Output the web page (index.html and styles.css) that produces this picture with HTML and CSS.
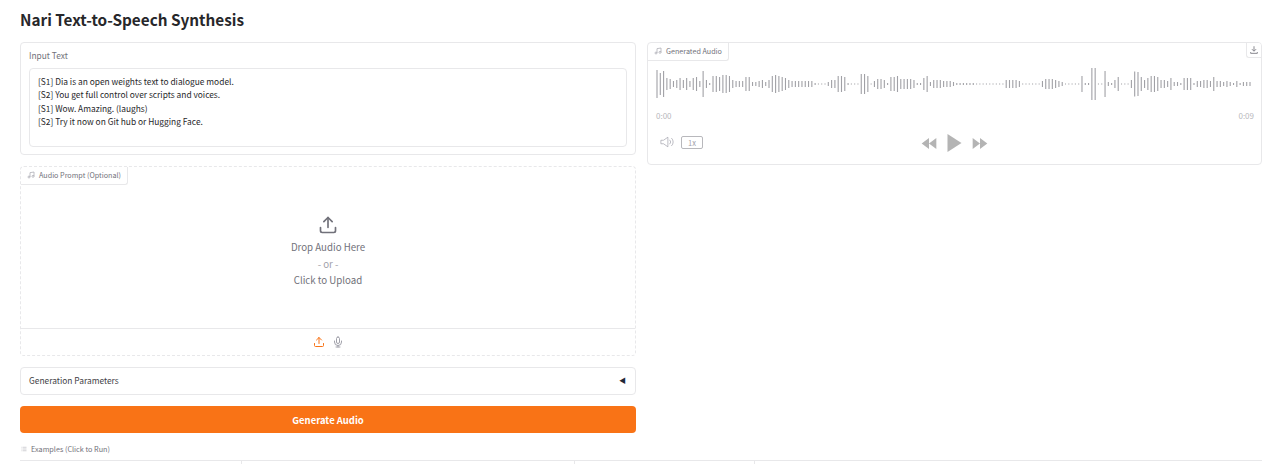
FILE: index.html
```html
<!DOCTYPE html>
<html lang="en">
<head>
<meta charset="utf-8">
<title>Nari Text-to-Speech Synthesis</title>
<link rel="stylesheet" href="styles.css">
</head>
<body>
<main class="page">
  <h1 class="title">Nari Text-to-Speech Synthesis</h1>
  <div class="columns">
    <section class="col">
      <div class="card input-card">
        <div class="label">Input Text</div>
        <div class="textarea">[S1] Dia is an open weights text to dialogue model.
[S2] You get full control over scripts and voices.
[S1] Wow. Amazing. (laughs)
[S2] Try it now on Git hub or Hugging Face.</div>
      </div>
      <div class="card prompt-card">
        <div class="tag">
          <svg class="tag-icon" viewBox="0 0 24 24"><path d="M9 18V5l12-2v13"/><circle cx="6" cy="18" r="3"/><circle cx="18" cy="16" r="3"/></svg>
          <span>Audio Prompt (Optional)</span>
        </div>
        <div class="drop">
          <svg class="upload-big" viewBox="0 0 24 24"><path d="M21 15v4a2 2 0 0 1-2 2H5a2 2 0 0 1-2-2v-4"/><path d="M17 8l-5-5-5 5"/><path d="M12 3v12"/></svg>
          <div class="drop-line">Drop Audio Here</div>
          <div class="drop-or">- or -</div>
          <div class="drop-line">Click to Upload</div>
        </div>
        <div class="sources">
          <svg class="src-upload" viewBox="0 0 24 24"><path d="M21 15v4a2 2 0 0 1-2 2H5a2 2 0 0 1-2-2v-4"/><path d="M17 8l-5-5-5 5"/><path d="M12 3v12"/></svg>
          <svg class="src-mic" viewBox="0 0 24 24"><path d="M12 2a3 3 0 0 0-3 3v7a3 3 0 0 0 6 0V5a3 3 0 0 0-3-3z"/><path d="M19 10v2a7 7 0 0 1-14 0v-2"/><path d="M12 19v3"/><path d="M8 22h8"/></svg>
        </div>
      </div>
      <div class="card accordion">
        <span>Generation Parameters</span>
        <span class="caret">◀</span>
      </div>
      <button class="generate">Generate Audio</button>
      <div class="examples-label">
        <svg class="list-icon" viewBox="0 0 12 10"><path d="M3 1.500h8M3 5h8M3 8.500h8M0.500 1.500h1M0.500 5h1M0.500 8.500h1"/></svg>
        <span>Examples (Click to Run)</span>
      </div>
    </section>
    <section class="col">
      <div class="card audio-card">
        <div class="tag">
          <svg class="tag-icon" viewBox="0 0 24 24"><path d="M9 18V5l12-2v13"/><circle cx="6" cy="18" r="3"/><circle cx="18" cy="16" r="3"/></svg>
          <span>Generated Audio</span>
        </div>
        <button class="download" aria-label="Download">
          <svg viewBox="0 0 24 24"><path d="M12 3v11M7 10l5 5 5-5M4 17v3h16v-3"/></svg>
        </button>
        <div class="player">
          <svg id="wave" class="wave" viewBox="0 0 596 36"></svg>
          <div class="times"><span>0:00</span><span>0:09</span></div>
          <div class="controls">
            <div class="ctl-left">
              <svg class="volume" viewBox="0 0 16 12"><path d="M1 4h3l5-3.500v11L4 8H1z"/><path d="M11 3.500a3.500 3.500 0 0 1 0 5M13 1.500a6 6 0 0 1 0 9"/></svg>
              <span class="speed">1x</span>
            </div>
            <div class="ctl-mid">
              <svg class="skip" viewBox="0 0 16 12"><path d="M8 0v12L0 6zM16 0v12L8 6z"/></svg>
              <svg class="play" viewBox="0 0 14 18"><path d="M0 0l14 9L0 18z"/></svg>
              <svg class="skip" viewBox="0 0 16 12"><path d="M0 0l8 6-8 6zM8 0l8 6-8 6z"/></svg>
            </div>
          </div>
        </div>
      </div>
    </section>
  </div>
  <div class="table-top">
    <div class="cell cell-a"></div>
    <div class="cell cell-b"></div>
    <div class="cell cell-c"></div>
    <div class="cell cell-d"></div>
  </div>
</main>
<script src="wave.js"></script>
</body>
</html>
```
FILE: styles.css
```css
* { box-sizing: border-box; }
html, body { margin: 0; height: 464px; overflow: hidden; background: #fff; }
body { font-family: "Noto Sans CJK SC", "Noto Sans", sans-serif; color: #27272a; }
.page { padding: 8px 18px 0 20px; }
.title { margin: 0 0 11px; font-size: 15.300px; line-height: 23px; font-weight: 600; color: #27272a; }
.columns { display: flex; gap: 11px; align-items: flex-start; }
.col { display: flex; flex-direction: column; }
.col:first-child { width: 616px; }
.col:last-child { width: 615px; }
.card { position: relative; background: #fff; border: 1px solid #e8e8ea; border-radius: 4px; }
.input-card { height: 113px; padding: 5px 8px 0; }
.label { font-size: 8.400px; line-height: 14px; color: #71717a; }
.textarea { margin-top: 6px; height: 79px; padding: 6px 8px; border: 1px solid #e8e8ea; border-radius: 4px; white-space: pre-wrap; font-size: 8.400px; line-height: 13.300px; color: #27272a; }
.prompt-card { margin-top: 11px; height: 190px; border-style: dashed; display: flex; flex-direction: column; }
.tag { display: flex; align-items: center; gap: 4px; width: fit-content; height: 18px; padding: 0 6px 2px 6px; font-size: 7.200px; color: #71717a; border-right: 1px solid #e8e8ea; border-bottom: 1px solid #e8e8ea; border-radius: 0 0 3px 0; }
.tag-icon { width: 8px; height: 8px; fill: none; stroke: #a1a1aa; stroke-width: 2; }
.drop { flex: 1; display: flex; flex-direction: column; align-items: center; padding-top: 30px; font-size: 9.700px; line-height: 16.500px; color: #71717a; }
.upload-big { width: 20px; height: 20px; margin-bottom: 4px; fill: none; stroke: #71717a; stroke-width: 2; stroke-linecap: round; stroke-linejoin: round; }
.drop-or { color: #a1a1aa; }
.sources { height: 27px; border-top: 1px solid #e8e8ea; display: flex; align-items: center; justify-content: center; gap: 7px; }
.sources svg { fill: none; stroke-width: 2; stroke-linecap: round; stroke-linejoin: round; }
.src-upload { width: 12px; height: 12px; stroke: #f97316; }
.src-mic { width: 12px; height: 12px; stroke: #a1a1aa; }
.accordion { margin-top: 11px; height: 28px; padding: 0 9px 2px 8px; display: flex; align-items: center; justify-content: space-between; font-size: 8.400px; color: #3f3f46; }
.caret { font-size: 7px; color: #1f2937; }
.generate { margin-top: 11px; height: 27px; border: 0; border-radius: 4px; background: #f97316; color: #fff; font: 600 9.450px "Noto Sans CJK SC", "Noto Sans", sans-serif; }
.examples-label { margin-top: 9px; height: 14px; display: flex; align-items: center; gap: 4px; padding-left: 1px; font-size: 7.250px; color: #71717a; }
.list-icon { width: 6px; height: 6px; fill: none; stroke: #a1a1aa; stroke-width: 1; }
.audio-card { height: 123px; }
.player { padding: 5px 7px 0 8px; }
.download { position: absolute; top: 0; right: 0; width: 15px; height: 15px; padding: 2px; border: 0; border-left: 1px solid #e8e8ea; border-bottom: 1px solid #e8e8ea; border-radius: 0 3px 0 3px; background: #fff; }
.download svg { display: block; width: 100%; height: 100%; fill: none; stroke: #71717a; stroke-width: 2; }
.wave { display: block; width: 596px; height: 36px; }
.wave path { stroke: #a1a1a6; stroke-width: 1.100; fill: none; }
.times { display: flex; justify-content: space-between; margin-top: 8px; height: 12px; font-size: 8px; line-height: 12px; color: #b8b8bc; }
.controls { position: relative; display: flex; align-items: center; margin-top: 8px; height: 24px; }
.ctl-left { display: flex; align-items: center; gap: 7px; padding-left: 4px; }
.volume { width: 14px; height: 12px; fill: none; stroke: #a1a1aa; stroke-width: 0.800; }
.speed { display: flex; align-items: center; justify-content: center; width: 22px; height: 13px; border: 1px solid #b8b8bc; border-radius: 2px; font-size: 7.500px; color: #a1a1aa; }
.ctl-mid { position: absolute; left: 265px; top: 4px; display: flex; align-items: center; gap: 10px; }
.skip { width: 16px; height: 11px; fill: #b4b4b4; }
.play { width: 15px; height: 18px; fill: #b4b4b4; }
.table-top { display: flex; height: 4px; margin-top: 4px; width: 1242px; border-top: 1px solid #e8e8ea; }
.cell { height: 3px; border-right: 1px solid #e8e8ea; }
.cell-a { width: 222px; }
.cell-b { width: 333px; }
.cell-c { width: 180px; }
.cell-d { flex: 1; border-right: 0; }
```
FILE: wave.js
```js
var heights = [
  28,22,26,12,10,6,8,12,8,12,6,12,14,6,26,8,2,16,16,14,18,18,16,8,6,6,6,14,14,4,4,6,8,4,8,16,18,16,14,12,8,6,6,6,
  6,6,6,6,2,1,1,1,4,8,8,16,16,14,2,1,1,1,20,20,16,1,6,10,10,8,2,14,14,16,10,10,10,10,8,2,2,12,16,4,8,8,8,6,6,6,4,
  2,2,2,2,2,2,1,1,1,1,1,1,1,1,1,8,8,8,8,6,1,1,1,1,1,1,6,10,10,10,8,6,4,1,1,1,1,1,16,2,2,32,32,1,1,
  26,4,2,8,14,1,1,1,8,25,24,14,8,12,16,16,14,8,8,6,12,4,4,2,12,12,12,2,6,6,8,8,6,14,6,6,4,6,4,2,6,2,4,4,4
];
var d = "";
var step = 593 / (heights.length - 1);
for (var i = 0; i < heights.length; i++) {
  var x = (i * step + 1).toFixed(2);
  var h = heights[i] / 2;
  d += "M" + x + " " + (18 - h) + "V" + (18 + h);
}
var p = document.createElementNS("http://www.w3.org/2000/svg", "path");
p.setAttribute("d", d);
document.getElementById("wave").appendChild(p);
```
